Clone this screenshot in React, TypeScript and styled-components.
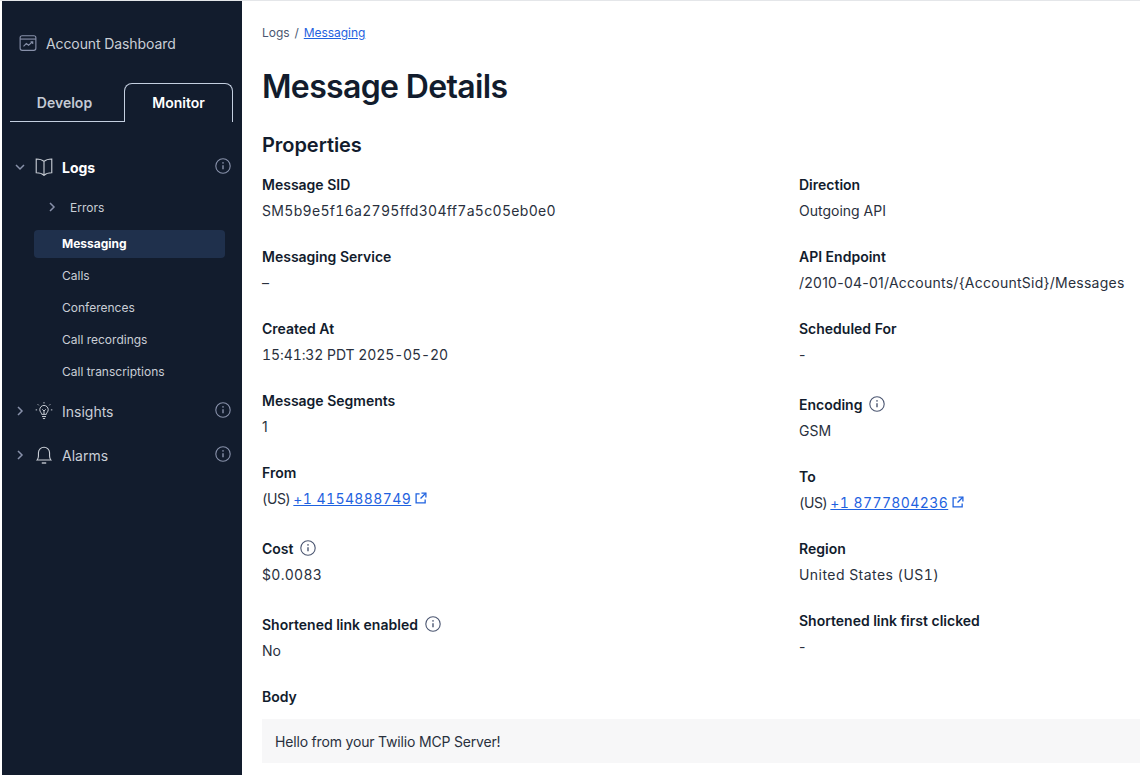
import { createGlobalStyle } from 'styled-components';
import styled from 'styled-components';
import { ReactNode } from 'react';

const GlobalStyle = createGlobalStyle`
  html, body {
    margin: 0;
    padding: 0;
    background: #ffffff;
    font-family: 'Inter', 'Liberation Sans', sans-serif;
    overflow: hidden;
  }
`;

const Page = styled.div`
  width: 1140px;
  height: 775px;
  display: flex;
  overflow: hidden;
  border-top: 1px solid #e4e6e9;
  box-sizing: border-box;
`;

const Sidebar = styled.nav`
  width: 240px;
  margin-left: 2px;
  flex-shrink: 0;
  background: #121c2d;
  display: flex;
  flex-direction: column;
  padding-top: 31px;
  box-sizing: border-box;
`;

const DashboardLink = styled.div`
  display: flex;
  align-items: center;
  gap: 9px;
  height: 22px;
  padding-left: 17px;
  font-size: 14px;
  letter-spacing: -0.1px;
  color: #c9ced6;
  svg {
    color: #8891aa;
  }
`;

const Tabs = styled.div`
  display: flex;
  margin: 29px 0 0 8px;
  width: 223px;
  height: 39px;
`;

const Tab = styled.div<{ $active?: boolean }>`
  box-sizing: border-box;
  width: ${(p) => (p.$active ? '109px' : '114px')};
  padding: ${(p) => (p.$active ? '0 0 2px' : '0 5px 0 0')};
  display: flex;
  align-items: center;
  justify-content: center;
  font-size: 14px;
  font-weight: 600;
  color: ${(p) => (p.$active ? '#ffffff' : '#c4cad4')};
  border: 1px solid #c4cfe0;
  border-width: ${(p) => (p.$active ? '1px 1px 0 1px' : '0 0 1px 0')};
  border-radius: ${(p) => (p.$active ? '8px 8px 0 0' : '0')};
`;

const NavGroup = styled.div`
  display: flex;
  flex-direction: column;
  margin-top: 23px;
`;

const TopItem = styled.div<{ $open?: boolean }>`
  display: flex;
  align-items: center;
  height: 44px;
  padding-left: 12px;
  font-size: 14px;
  font-weight: ${(p) => (p.$open ? 700 : 400)};
  color: ${(p) => (p.$open ? '#ffffff' : '#c9ced6')};
`;

const Caret = styled.span`
  width: 12px;
  display: flex;
  justify-content: center;
  color: #8891aa;
`;

const ItemIcon = styled.span`
  width: 20px;
  margin: 0 8px 0 8px;
  display: flex;
  justify-content: center;
  color: #c9ced6;
`;

const ItemLabel = styled.span`
  flex: 1;
`;

const HintIcon = styled.span`
  display: flex;
  margin: -2px 11px 0 0;
  color: #8891aa;
`;

const SubList = styled.div`
  display: flex;
  flex-direction: column;
  margin-bottom: 1px;
`;

const SubItem = styled.div<{ $active?: boolean }>`
  box-sizing: border-box;
  display: flex;
  align-items: center;
  height: 28px;
  margin: 2px 17px 2px 32px;
  padding: 0 0 2px 28px;
  border-radius: 4px;
  font-size: 12px;
  font-weight: ${(p) => (p.$active ? 700 : 400)};
  color: ${(p) => (p.$active ? '#ffffff' : '#c9ced6')};
  background: ${(p) => (p.$active ? '#1f304c' : 'transparent')};
`;

const ErrorsItem = styled(SubItem)`
  margin-top: 4px;
  margin-bottom: 7px;
  padding: 0 0 0 14px;
  gap: 14px;
  svg {
    color: #8891aa;
  }
`;

const Main = styled.main`
  flex: 1;
  min-width: 0;
  padding: 22px 0 0 20px;
  color: #121c2d;
`;

const Crumbs = styled.div`
  display: flex;
  gap: 5px;
  height: 18px;
  align-items: center;
  font-size: 12px;
  letter-spacing: -0.05px;
  color: #4b5671;
`;

const InlineLink = styled.a`
  color: #1f62e0;
  text-decoration: underline;
`;

const Title = styled.h1`
  margin: 26px 0 0;
  font-size: 32px;
  line-height: 40px;
  font-weight: 600;
  letter-spacing: -0.65px;
`;

const SectionTitle = styled.h2`
  margin: 24px 0 0;
  font-size: 20px;
  line-height: 28px;
  font-weight: 600;
  letter-spacing: -0.05px;
`;

const Columns = styled.div`
  display: grid;
  grid-template-columns: 537px 1fr;
  margin-top: 14px;
`;

const Column = styled.div`
  display: flex;
  flex-direction: column;
`;

const Field = styled.div<{ $tall?: boolean }>`
  display: flex;
  flex-direction: column;
  height: ${(p) => (p.$tall ? '76px' : '72px')};
`;

const Label = styled.div`
  display: flex;
  align-items: center;
  gap: 7px;
  height: 22px;
  font-size: 14px;
  font-weight: 600;
  color: #121c2d;
  svg {
    color: #4b5671;
  }
`;

const Value = styled.div<{ $tabular?: boolean; $tracking?: number }>`
  display: flex;
  align-items: center;
  gap: 4px;
  height: 22px;
  margin-top: 4px;
  font-size: 14px;
  color: #29303d;
  white-space: nowrap;
  font-variant-numeric: ${(p) => (p.$tabular ? 'tabular-nums' : 'normal')};
  letter-spacing: ${(p) => p.$tracking ?? 0}px;
`;

const BodyLabel = styled(Label)`
  margin-bottom: 12px;
`;

const BodyBox = styled.div`
  box-sizing: border-box;
  height: 44px;
  padding-left: 13px;
  display: flex;
  align-items: center;
  background: #f7f7f8;
  font-size: 14px;
  letter-spacing: -0.18px;
  color: #29303d;
`;

const OutIcon = styled.svg`
  color: #1f62e0;
  flex-shrink: 0;
`;

const Country = styled.span`
  letter-spacing: -0.5px;
  margin-right: -1px;
`;

const Info = ({ size = 16 }: { size?: number }) => (
  <svg width={size} height={size} viewBox="0 0 16 16" fill="none" stroke="currentColor">
    <circle cx="8" cy="8" r="7.2" strokeWidth="1.1" />
    <path d="M8 7.2v4" strokeWidth="1.4" />
    <circle cx="8" cy="4.9" r="0.8" fill="currentColor" stroke="none" />
  </svg>
);

const External = () => (
  <OutIcon width="12" height="12" viewBox="0 0 13 13" fill="none" stroke="currentColor" strokeWidth="1.4">
    <path d="M5 2H1.2v9.8H11V8" />
    <path d="M7 1.2h4.8V6" />
    <path d="M11.6 1.4 6 7" />
  </OutIcon>
);

const ChevronRight = () => (
  <svg width="8" height="10" viewBox="0 0 8 10" fill="none" stroke="currentColor" strokeWidth="1.5">
    <path d="M2 1l4 4-4 4" />
  </svg>
);

const ChevronDown = () => (
  <svg width="10" height="8" viewBox="0 0 10 8" fill="none" stroke="currentColor" strokeWidth="1.5">
    <path d="M1 2l4 4 4-4" />
  </svg>
);

const Book = () => (
  <svg width="20" height="20" viewBox="0 0 18 18" fill="none" stroke="currentColor" strokeWidth="1">
    <path d="M9 4C7.5 2.6 4.5 1.8 2 1.8v12.4c2.5 0 5.5.8 7 2.2 1.500-1.400 4.500-2.200 7-2.200V1.800C13.500 1.800 10.500 2.600 9 4Z" />
    <path d="M9 4v12.400" />
  </svg>
);

const Bulb = () => (
  <svg width="20" height="20" viewBox="0 0 18 18" fill="none" stroke="currentColor" strokeWidth="0.9">
    <path d="M6.900 12c0-1.500-1.700-2.100-1.700-4.200a3.800 3.800 0 0 1 7.600 0c0 2.100-1.700 2.700-1.700 4.200Z" />
    <path d="M7.200 14h3.600M8 15.800h2" />
    <path d="M9 1v1.200M3.400 3l.9.900M14.600 3l-.9.900M1.500 8h1.300M15.200 8h1.300" />
    <path d="M7.500 7.500 9 9l1.500-1.500M9 9v3" />
  </svg>
);

const Bell = () => (
  <svg width="20" height="20" viewBox="0 0 18 18" fill="none" stroke="currentColor" strokeWidth="1">
    <path d="M2.800 13.500c.9-1 1.200-1.800 1.200-3.500V7a5 5 0 0 1 10 0v3c0 1.700.3 2.500 1.200 3.500Z" />
    <path d="M7 16.200h4" strokeWidth="1.200" />
  </svg>
);

const Chart = () => (
  <svg width="18" height="18" viewBox="0 0 16 16" fill="none" stroke="currentColor" strokeWidth="1">
    <rect x="1" y="1.500" width="14" height="13" rx="1.800" />
    <path d="M1 4.500h14" />
    <path d="M4 11l2.500-2.500 2 1.500 3.500-3M10.300 7h1.900v1.800" />
  </svg>
);

type NavProps = { icon: ReactNode; label: string; open?: boolean };

const NavItem = ({ icon, label, open }: NavProps) => (
  <TopItem $open={open}>
    <Caret>{open ? <ChevronDown /> : <ChevronRight />}</Caret>
    <ItemIcon>{icon}</ItemIcon>
    <ItemLabel>{label}</ItemLabel>
    <HintIcon>
      <Info />
    </HintIcon>
  </TopItem>
);

const Phone = ({ number }: { number: string }) => (
  <>
    <Country>(US)</Country> <InlineLink>{number}</InlineLink>
    <External />
  </>
);

const App = () => {
  return (
    <>
      <GlobalStyle />
      <Page>
        <Sidebar>
          <DashboardLink>
            <Chart />
            Account Dashboard
          </DashboardLink>
          <Tabs>
            <Tab>Develop</Tab>
            <Tab $active>Monitor</Tab>
          </Tabs>
          <NavGroup>
            <NavItem icon={<Book />} label="Logs" open />
            <SubList>
              <ErrorsItem>
                <ChevronRight />
                Errors
              </ErrorsItem>
              <SubItem $active>Messaging</SubItem>
              <SubItem>Calls</SubItem>
              <SubItem>Conferences</SubItem>
              <SubItem>Call recordings</SubItem>
              <SubItem>Call transcriptions</SubItem>
            </SubList>
            <NavItem icon={<Bulb />} label="Insights" />
            <NavItem icon={<Bell />} label="Alarms" />
          </NavGroup>
        </Sidebar>
        <Main>
          <Crumbs>
            Logs <span>/</span> <InlineLink>Messaging</InlineLink>
          </Crumbs>
          <Title>Message Details</Title>
          <SectionTitle>Properties</SectionTitle>
          <Columns>
            <Column>
              <Field>
                <Label>Message SID</Label>
                <Value $tabular $tracking={0.31}>SM5b9e5f16a2795ffd304ff7a5c05eb0e0</Value>
              </Field>
              <Field>
                <Label>Messaging Service</Label>
                <Value>–</Value>
              </Field>
              <Field>
                <Label>Created At</Label>
                <Value $tabular $tracking={-0.08}>15:41:32 PDT 2025-05-20</Value>
              </Field>
              <Field>
                <Label>Message Segments</Label>
                <Value>1</Value>
              </Field>
              <Field $tall>
                <Label>From</Label>
                <Value $tabular $tracking={0.4}>
                  <Phone number="+1 4154888749" />
                </Value>
              </Field>
              <Field $tall>
                <Label>
                  Cost <Info />
                </Label>
                <Value $tabular $tracking={0.3}>$0.0083</Value>
              </Field>
              <Field>
                <Label>
                  Shortened link enabled <Info />
                </Label>
                <Value>No</Value>
              </Field>
            </Column>
            <Column>
              <Field>
                <Label>Direction</Label>
                <Value>Outgoing API</Value>
              </Field>
              <Field>
                <Label>API Endpoint</Label>
                <Value $tracking={0.25}>/2010-04-01/Accounts/&#123;AccountSid&#125;/Messages</Value>
              </Field>
              <Field $tall>
                <Label>Scheduled For</Label>
                <Value>-</Value>
              </Field>
              <Field>
                <Label>
                  Encoding <Info />
                </Label>
                <Value>GSM</Value>
              </Field>
              <Field>
                <Label>To</Label>
                <Value $tabular $tracking={0.4}>
                  <Phone number="+1 8777804236" />
                </Value>
              </Field>
              <Field>
                <Label>Region</Label>
                <Value $tabular $tracking={0.45}>United States (US1)</Value>
              </Field>
              <Field>
                <Label>Shortened link first clicked</Label>
                <Value>-</Value>
              </Field>
            </Column>
          </Columns>
          <BodyLabel>Body</BodyLabel>
          <BodyBox>Hello from your Twilio MCP Server!</BodyBox>
        </Main>
      </Page>
    </>
  );
};

export default App;
